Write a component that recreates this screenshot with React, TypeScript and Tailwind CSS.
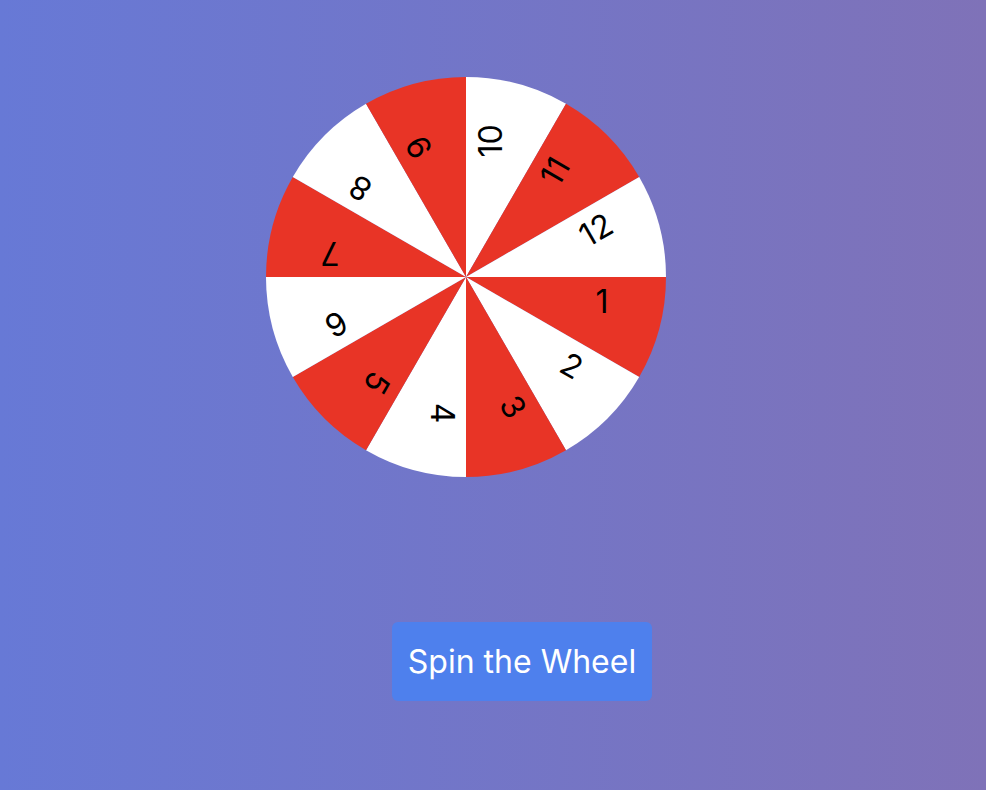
import React from 'react';

const segments = Array.from({ length: 12 }, (_, i) => i + 1);

const R = 200;

function slicePath(i: number) {
  const a0 = (i * 30 * Math.PI) / 180;
  const a1 = ((i + 1) * 30 * Math.PI) / 180;
  const x0 = R * Math.cos(a0);
  const y0 = R * Math.sin(a0);
  const x1 = R * Math.cos(a1);
  const y1 = R * Math.sin(a1);
  return `M0 0 L${x0} ${y0} A${R} ${R} 0 0 1 ${x1} ${y1} Z`;
}

const Wheel: React.FC = () => {
  return (
    <svg width={400} height={400} viewBox="-200 -200 400 400" className="block">
      {segments.map((n, i) => (
        <path key={n} d={slicePath(i)} fill={i % 2 === 0 ? '#e83426' : '#ffffff'} />
      ))}
      {segments.map((n, i) => (
        <text
          key={`t${n}`}
          transform={`rotate(${i * 30}) translate(136 24)`}
          textAnchor="middle"
          dominantBaseline="central"
          fontSize={32}
          fill="#000"
          style={{ fontFamily: 'Inter, "Noto Sans", sans-serif' }}
        >
          {n}
        </text>
      ))}
    </svg>
  );
};

export default function App() {
  return (
    <div className="min-h-[790px] w-full bg-[linear-gradient(to_right,#6779d6,#7f72b8)] font-['Inter',sans-serif] flex flex-col items-center pt-[77px]">
      <div className="mr-[54px]">
        <Wheel />
      </div>
      <button className="mt-[145px] ml-[58px] h-[79px] w-[260px] rounded-md bg-[#4e80ed] text-[32px] text-white flex items-center justify-center">
        Spin the Wheel
      </button>
    </div>
  );
}
